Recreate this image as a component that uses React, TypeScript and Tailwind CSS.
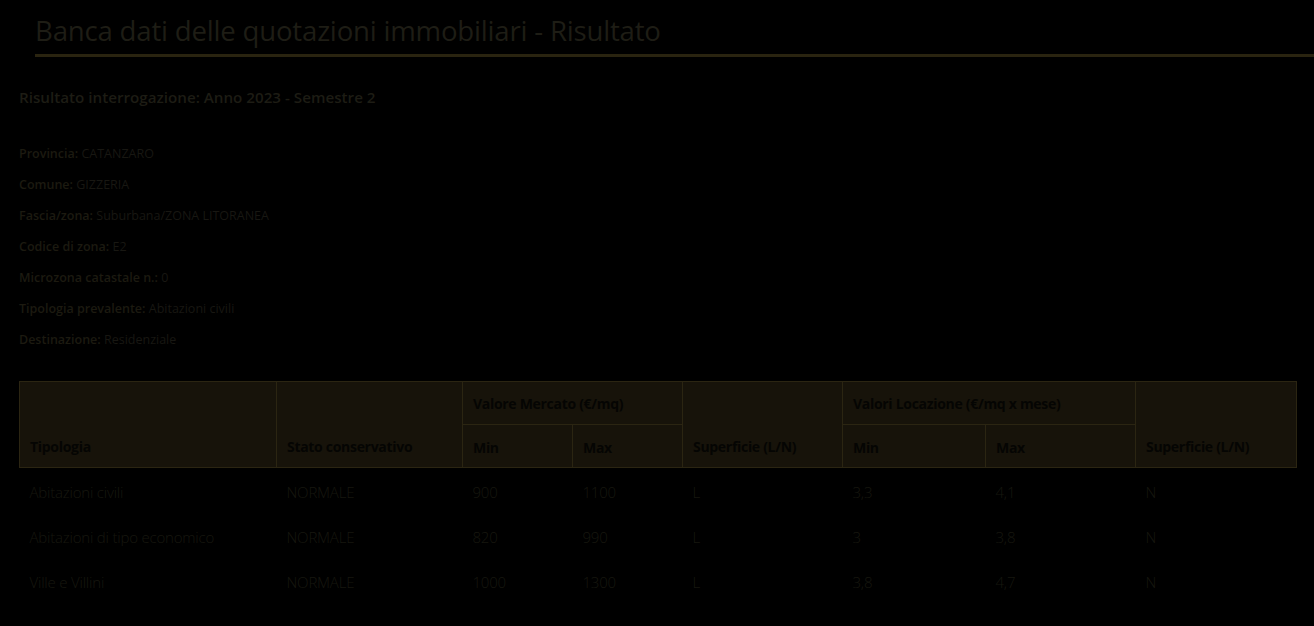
import React from "react";

const info: [string, string][] = [
  ["Provincia:", "CATANZARO"],
  ["Comune:", "GIZZERIA"],
  ["Fascia/zona:", "Suburbana/ZONA LITORANEA"],
  ["Codice di zona:", "E2"],
  ["Microzona catastale n.:", "0"],
  ["Tipologia prevalente:", "Abitazioni civili"],
  ["Destinazione:", "Residenziale"],
];

const rows = [
  ["Abitazioni civili", "NORMALE", "900", "1100", "L", "3,3", "4,1", "N"],
  ["Abitazioni di tipo economico", "NORMALE", "820", "990", "L", "3", "3,8", "N"],
  ["Ville e Villini", "NORMALE", "1000", "1300", "L", "3,8", "4,7", "N"],
];

const widths = ["w-[257px]", "w-[186px]", "w-[110px]", "w-[110px]", "w-[160px]", "w-[143px]", "w-[150px]", "w-[161px]"];

const base = "border border-[#2b2512] bg-[#17130a] text-[#050503] font-bold text-[14px] tracking-[-0.3px] text-left px-[10px]";
const thMid = base + " align-middle";
const thBot = base + " align-bottom pb-[10px]";

export default function App() {
  return (
    <div className="w-[1314px] h-[626px] bg-black overflow-hidden" style={{ fontFamily: "'Open Sans', 'Liberation Sans', sans-serif" }}>
      <div className="pl-[35px] pt-[11px]">
        <h1 className="text-[27.6px] leading-[38px] text-[#1e1d15] font-normal tracking-[-0.2px]">
          Banca dati delle quotazioni immobiliari - Risultato
        </h1>
        <div className="h-[3px] bg-[#2a2410] mt-[5px]" />
      </div>
      <div className="px-[19px]">
        <div className="mt-[30px] text-[15.2px] leading-[20px] font-semibold text-[#1d1c14]">
          Risultato interrogazione: Anno 2023 - Semestre 2
        </div>
        <div className="mt-[38px] flex flex-col gap-[14px]">
          {info.map(([k, v]) => (
            <div key={k} className="text-[12.5px] leading-[17px] text-[#181712]">
              <span className="font-semibold text-[#1c1a10]">{k}</span> <span>{v}</span>
            </div>
          ))}
        </div>
        <table className="mt-[33px] w-[1277px] border-collapse table-fixed">
          <colgroup>
            {widths.map((w, i) => (
              <col key={i} className={w} />
            ))}
          </colgroup>
          <thead>
            <tr className="h-[43px]">
              <th rowSpan={2} className={thBot}>Tipologia</th>
              <th rowSpan={2} className={thBot}>Stato conservativo</th>
              <th colSpan={2} className={thMid}>Valore Mercato (€/mq)</th>
              <th rowSpan={2} className={thBot}>Superficie (L/N)</th>
              <th colSpan={2} className={thMid}>Valori Locazione (€/mq x mese)</th>
              <th rowSpan={2} className={thBot}>Superficie (L/N)</th>
            </tr>
            <tr className="h-[43px]">
              <th className={thMid + " pt-[2px]"}>Min</th>
              <th className={thMid + " pt-[2px]"}>Max</th>
              <th className={thMid + " pt-[2px]"}>Min</th>
              <th className={thMid + " pt-[2px]"}>Max</th>
            </tr>
          </thead>
          <tbody>
            {rows.map((r, i) => (
              <tr key={i} className="h-[45px]">
                {r.map((c, j) => (
                  <td key={j} className="px-[10px] pt-[4px] text-[15px] tracking-[-0.2px] text-[#17170f] font-light align-middle">
                    {c}
                  </td>
                ))}
              </tr>
            ))}
          </tbody>
        </table>
      </div>
    </div>
  );
}
